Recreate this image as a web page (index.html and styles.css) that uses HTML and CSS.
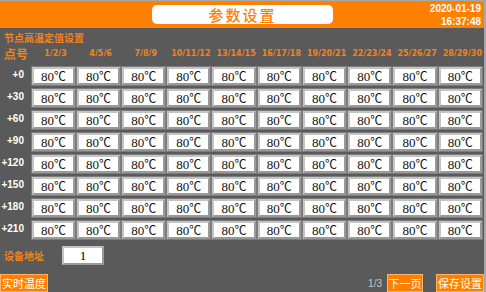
FILE: index.html
```html
<!DOCTYPE html>
<html lang="zh-CN">
<head>
    <meta charset="UTF-8">
    <title>参数设置</title>
    <link rel="stylesheet" href="styles.css">
</head>
<body>
    <div class="screen">
        <header class="topbar">
            <div class="title-box">参数设置</div>
            <div class="clock">
                <span>2020-01-19</span>
                <span>16:37:48</span>
            </div>
        </header>

        <main class="panel">
            <div class="panel-title">节点高温定值设置</div>

            <div class="limits-grid" id="limits-grid">
                <div class="corner-label">点号</div>
            </div>

            <div class="address-row">
                <span class="address-label">设备地址</span>
                <div class="address-box">1</div>
            </div>

            <footer class="bottom-bar">
                <button class="btn btn-wide">实时温度</button>
                <span class="page-num">1/3</span>
                <button class="btn btn-next">下一页</button>
                <button class="btn btn-wide">保存设置</button>
            </footer>
        </main>
    </div>

    <script src="app.js"></script>
</body>
</html>
```

FILE: app.js
```js
document.addEventListener('DOMContentLoaded', function() {
    const grid = document.getElementById('limits-grid');
    const COLUMNS = 10;
    const ROWS = 8;

    // column headers: 1/2/3, 4/5/6 ...
    for (let c = 0; c < COLUMNS; c++) {
        const n = c * 3 + 1;
        const head = document.createElement('div');
        head.className = 'col-head';
        head.textContent = n + '/' + (n + 1) + '/' + (n + 2);
        grid.appendChild(head);
    }

    // rows +0, +30 ... +210
    for (let r = 0; r < ROWS; r++) {
        const label = document.createElement('div');
        label.className = 'row-label';
        label.textContent = '+' + (r * 30);
        grid.appendChild(label);

        for (let c = 0; c < COLUMNS; c++) {
            const cell = document.createElement('div');
            cell.className = 'value-cell';
            cell.innerHTML = '80<span class="unit">℃</span>';
            grid.appendChild(cell);
        }
    }
});
```

FILE: styles.css
```css
:root {
    --orange: #ff8000;
    --text-orange: #f0841e;
    --panel-gray: #5a5a5a;
    --frame-gray: #a8a8a8;
    --white: #ffffff;
}

* {
    box-sizing: border-box;
}

body {
    margin: 0;
    width: 486px;
    height: 292px;
    overflow: hidden;
    background: var(--panel-gray);
    font-family: "Noto Sans CJK SC", "Liberation Sans", sans-serif;
}

.screen {
    width: 486px;
    height: 292px;
    display: flex;
    flex-direction: column;
    border-top: 1px solid var(--frame-gray);
    border-right: 2px solid var(--frame-gray);
}

/* header */
.topbar {
    height: 27px;
    background: var(--orange);
    display: flex;
    align-items: center;
}

.title-box {
    margin-left: 152px;
    width: 181px;
    height: 19px;
    background: var(--white);
    border-radius: 5px;
    color: var(--orange);
    font-size: 15px;
    font-weight: 500;
    line-height: 19px;
    text-align: center;
    letter-spacing: 2px;
}

.clock {
    margin-left: auto;
    margin-right: 3px;
    display: flex;
    flex-direction: column;
    align-items: flex-end;
    gap: 2px;
    color: var(--white);
    font-family: "Liberation Sans", sans-serif;
    font-size: 10px;
    font-weight: bold;
    line-height: 11px;
}

/* main panel */
.panel {
    flex: 1;
    display: flex;
    flex-direction: column;
    padding-top: 3px;
}

.panel-title {
    height: 13px;
    padding-left: 4px;
    color: var(--text-orange);
    font-size: 10px;
    font-weight: bold;
    line-height: 13px;
}

.limits-grid {
    width: 482px;
    display: grid;
    grid-template-columns: 30px repeat(10, 1fr);
    grid-template-rows: 19px;
    grid-auto-rows: 18px;
    column-gap: 2px;
    row-gap: 4px;
}

.corner-label {
    padding-left: 4px;
    white-space: nowrap;
    color: var(--text-orange);
    font-size: 12px;
    font-weight: bold;
    line-height: 19px;
}

.col-head {
    padding-left: 4px;
    color: var(--text-orange);
    font-family: "DejaVu Sans", sans-serif;
    font-size: 8px;
    font-weight: bold;
    line-height: 19px;
    text-align: center;
}

.row-label {
    padding-right: 6px;
    color: var(--white);
    font-family: "Liberation Sans", sans-serif;
    font-size: 10px;
    font-weight: bold;
    line-height: 16px;
    text-align: right;
}

.value-cell {
    background: var(--white);
    border: 2px solid;
    border-color: #c4c4c4 #9a9a9a #9a9a9a #c4c4c4;
    box-shadow: 0 0 0 1px #7c7c7c;
    color: #111;
    font-family: "Liberation Serif", serif;
    font-size: 13px;
    line-height: 14px;
    text-align: center;
}

.unit {
    font-family: "Noto Sans CJK SC", sans-serif;
    font-size: 12px;
}

/* device address */
.address-row {
    display: flex;
    align-items: center;
    margin-top: 7px;
    height: 19px;
}

.address-label {
    width: 62px;
    padding-left: 4px;
    color: var(--text-orange);
    font-size: 10px;
    font-weight: bold;
}

.address-box {
    width: 42px;
    height: 19px;
    background: var(--white);
    border: 2px solid;
    border-color: #c4c4c4 #9a9a9a #9a9a9a #c4c4c4;
    font-family: "Liberation Serif", serif;
    font-size: 13px;
    line-height: 15px;
    text-align: center;
}

/* bottom buttons */
.bottom-bar {
    margin-top: auto;
    height: 18px;
    display: flex;
    align-items: flex-end;
}

.btn {
    height: 18px;
    padding: 0;
    background: var(--orange);
    border: 1px solid #ffb366;
    color: var(--white);
    font-family: "Noto Sans CJK SC", sans-serif;
    font-size: 11px;
    line-height: 15px;
    cursor: pointer;
}

.btn-wide {
    width: 48px;
}

.btn-next {
    width: 36px;
    margin-right: 13px;
}

.page-num {
    margin-left: auto;
    margin-right: 5px;
    color: #c8c8c8;
    font-family: "Liberation Sans", sans-serif;
    font-size: 10px;
    line-height: 16px;
}
```
